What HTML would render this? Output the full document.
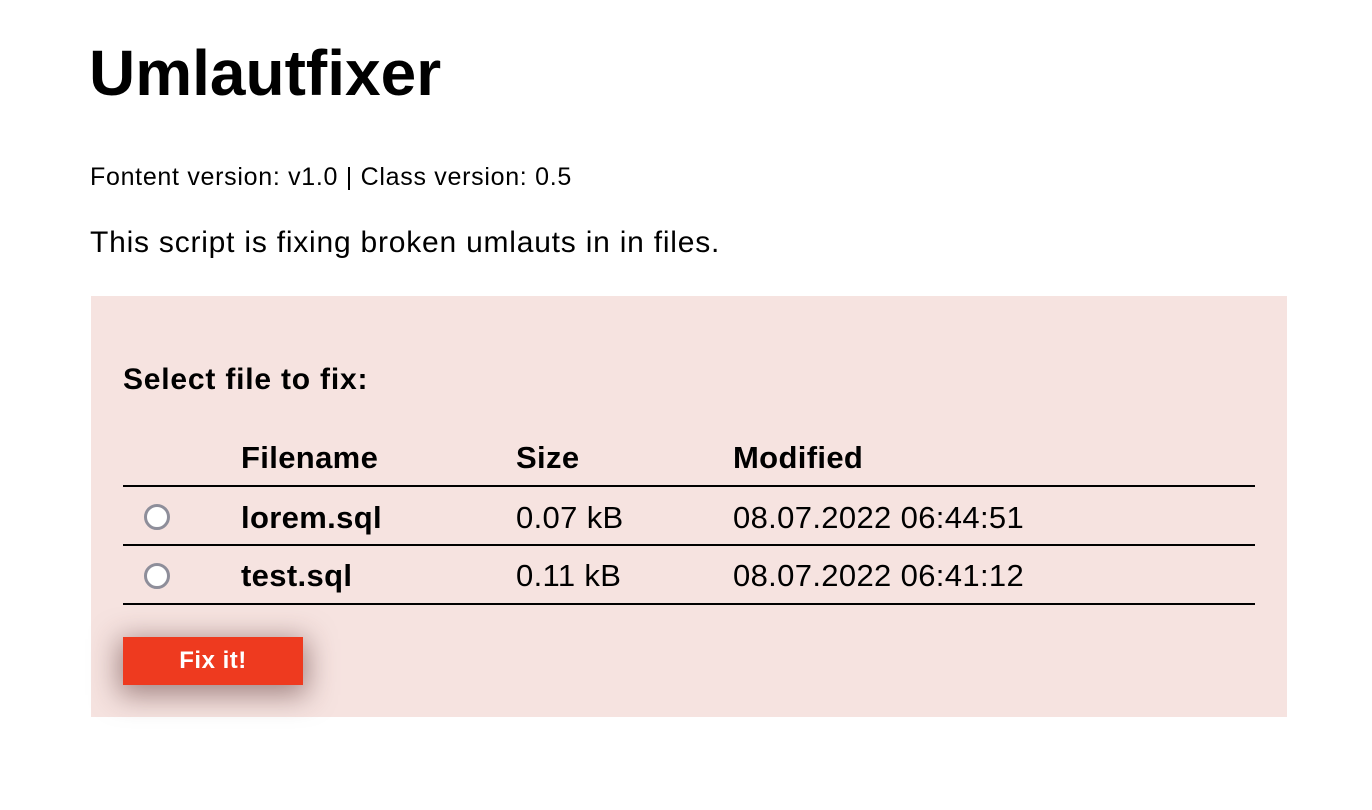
<!DOCTYPE html>
<html><head><meta charset="utf-8"><style>
html,body{margin:0;padding:0;background:#fff;}
body{font-family:"Liberation Sans",Arial,sans-serif;color:#000;width:1372px;height:810px;position:relative;overflow:hidden}
.a{position:absolute;white-space:nowrap;line-height:1}
h1{position:absolute;left:89px;top:41px;margin:0;font-size:64px;font-weight:bold;line-height:1}
.box{position:absolute;left:91px;top:296px;width:1196px;height:421px;background:#f6e3e0}
.line{position:absolute;left:123px;width:1132px;height:2px;background:#000}
.radio{position:absolute;width:20px;height:20px;border:3px solid #8e8e9a;border-radius:50%;background:#fff;box-sizing:content-box}
.btn{position:absolute;left:123px;top:637px;width:180px;height:48px;background:#ee3a1f;color:#fff;font-weight:bold;font-size:24px;letter-spacing:0.5px;text-align:center;line-height:48px;box-shadow:0 6px 28px 4px rgba(80,40,40,.5)}
.t{font-size:31px;letter-spacing:0.35px}
.b{font-weight:bold}
</style></head><body>
<h1>Umlautfixer</h1>
<div class="a" style="left:90px;top:165px;font-size:25px;letter-spacing:0.7px">Fontent version: v1.0 | Class version: 0.5</div>
<div class="a" style="left:90px;top:228px;font-size:30px;letter-spacing:0.78px">This script is fixing broken umlauts in in files.</div>
<div class="box"></div>
<div class="a b" style="left:123px;top:365px;font-size:30px;letter-spacing:0.8px">Select file to fix:</div>
<div class="a t b" style="left:241px;top:442px">Filename</div>
<div class="a t b" style="left:516px;top:442px">Size</div>
<div class="a t b" style="left:733px;top:442px">Modified</div>
<div class="line" style="top:485px"></div>
<div class="radio" style="left:144px;top:504px"></div>
<div class="a t b" style="left:241px;top:502px">lorem.sql</div>
<div class="a t" style="left:516px;top:502px">0.07 kB</div>
<div class="a t" style="left:733px;top:502px">08.07.2022 06:44:51</div>
<div class="line" style="top:544px"></div>
<div class="radio" style="left:144px;top:563px"></div>
<div class="a t b" style="left:241px;top:560px">test.sql</div>
<div class="a t" style="left:516px;top:560px">0.11 kB</div>
<div class="a t" style="left:733px;top:560px">08.07.2022 06:41:12</div>
<div class="line" style="top:603px"></div>
<div class="btn">Fix it!</div>
</body></html>
